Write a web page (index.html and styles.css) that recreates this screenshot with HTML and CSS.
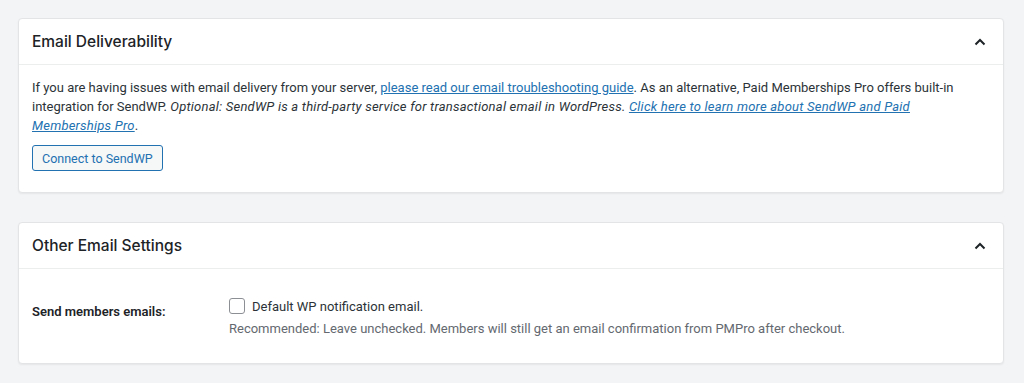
FILE: index.html
```html
<!DOCTYPE html>
<html lang="en">
  <head>
    <meta charset="UTF-8" />
    <title>Email Settings</title>
    <link rel="stylesheet" href="styles.css">
  </head>
  <body>
    <section class="boks">
      <header class="boks-top">
        <h2>Email Deliverability</h2>
        <svg class="pil" width="14" height="14" viewBox="0 0 14 14"><path d="M2.5 9.5 L7 5 L11.5 9.5" fill="none" stroke="#1d2327" stroke-width="2"/></svg>
      </header>
      <div class="boks-indhold">
        <p class="tekst">If you are having issues with email delivery from your server, <a href="#">please read our email troubleshooting guide</a>. As an alternative, Paid Memberships Pro offers built-in integration for SendWP. <em>Optional: SendWP is a third-party service for transactional email in WordPress. <a href="#">Click here to learn more about SendWP and Paid Memberships Pro</a></em>.</p>
        <button class="knap">Connect to SendWP</button>
      </div>
    </section>

    <section class="boks">
      <header class="boks-top">
        <h2>Other Email Settings</h2>
        <svg class="pil" width="14" height="14" viewBox="0 0 14 14"><path d="M2.5 9.5 L7 5 L11.5 9.5" fill="none" stroke="#1d2327" stroke-width="2"/></svg>
      </header>
      <div class="boks-indhold raekke">
        <div class="etiket">Send members emails:</div>
        <div class="felt">
          <label class="valg"><span class="boks-check"></span> Default WP notification email.</label>
          <p class="hjaelp">Recommended: Leave unchecked. Members will still get an email confirmation from PMPro after checkout.</p>
        </div>
      </div>
    </section>
  </body>
</html>
```

FILE: styles.css
```css
body {
  margin: 0;
  padding: 18px 20px 20px 18px;
  background-color: #f3f4f6;
  font-family: Roboto, "Noto Sans", sans-serif;
  color: #1d2327;
  font-size: 13px;
}

.boks {
  background-color: white;
  border: 1px solid #e3e4e6;
  border-radius: 4px;
  box-shadow: 0 1px 2px rgba(0, 0, 0, 0.06);
  margin-bottom: 29px;
}

.boks:last-child {
  margin-bottom: 0;
}

.boks-top {
  display: flex;
  justify-content: space-between;
  align-items: center;
  height: 45px;
  padding: 0 16px 0 13px;
  border-bottom: 1px solid #eceded;
}

.boks-top h2 {
  margin: 0;
  font-family: Inter, sans-serif;
  font-size: 15.5px;
  font-weight: 500;
}

.boks-indhold {
  padding: 13px 13px 21px;
}

.tekst {
  margin: 0 0 10px;
  line-height: 19px;
  color: #2c3338;
}

.tekst em {
  letter-spacing: 0.22px;
}

a {
  color: #2271b1;
}

.knap {
  font-family: inherit;
  font-size: 12.5px;
  color: #2271b1;
  background-color: #f6f7f7;
  border: 1px solid #2271b1;
  border-radius: 3px;
  padding: 0 9px;
  height: 26px;
}

.raekke {
  display: flex;
  align-items: flex-start;
  padding: 29px 13px 27px;
}

.etiket {
  width: 197px;
  font-weight: 600;
  padding-top: 6px;
}

.valg {
  display: flex;
  align-items: center;
  gap: 7px;
  color: #2c3338;
}

.boks-check {
  width: 14px;
  height: 14px;
  border: 1px solid #8c8f94;
  border-radius: 3px;
  background-color: white;
}

.hjaelp {
  margin: 7px 0 0;
  color: #646970;
}
```
